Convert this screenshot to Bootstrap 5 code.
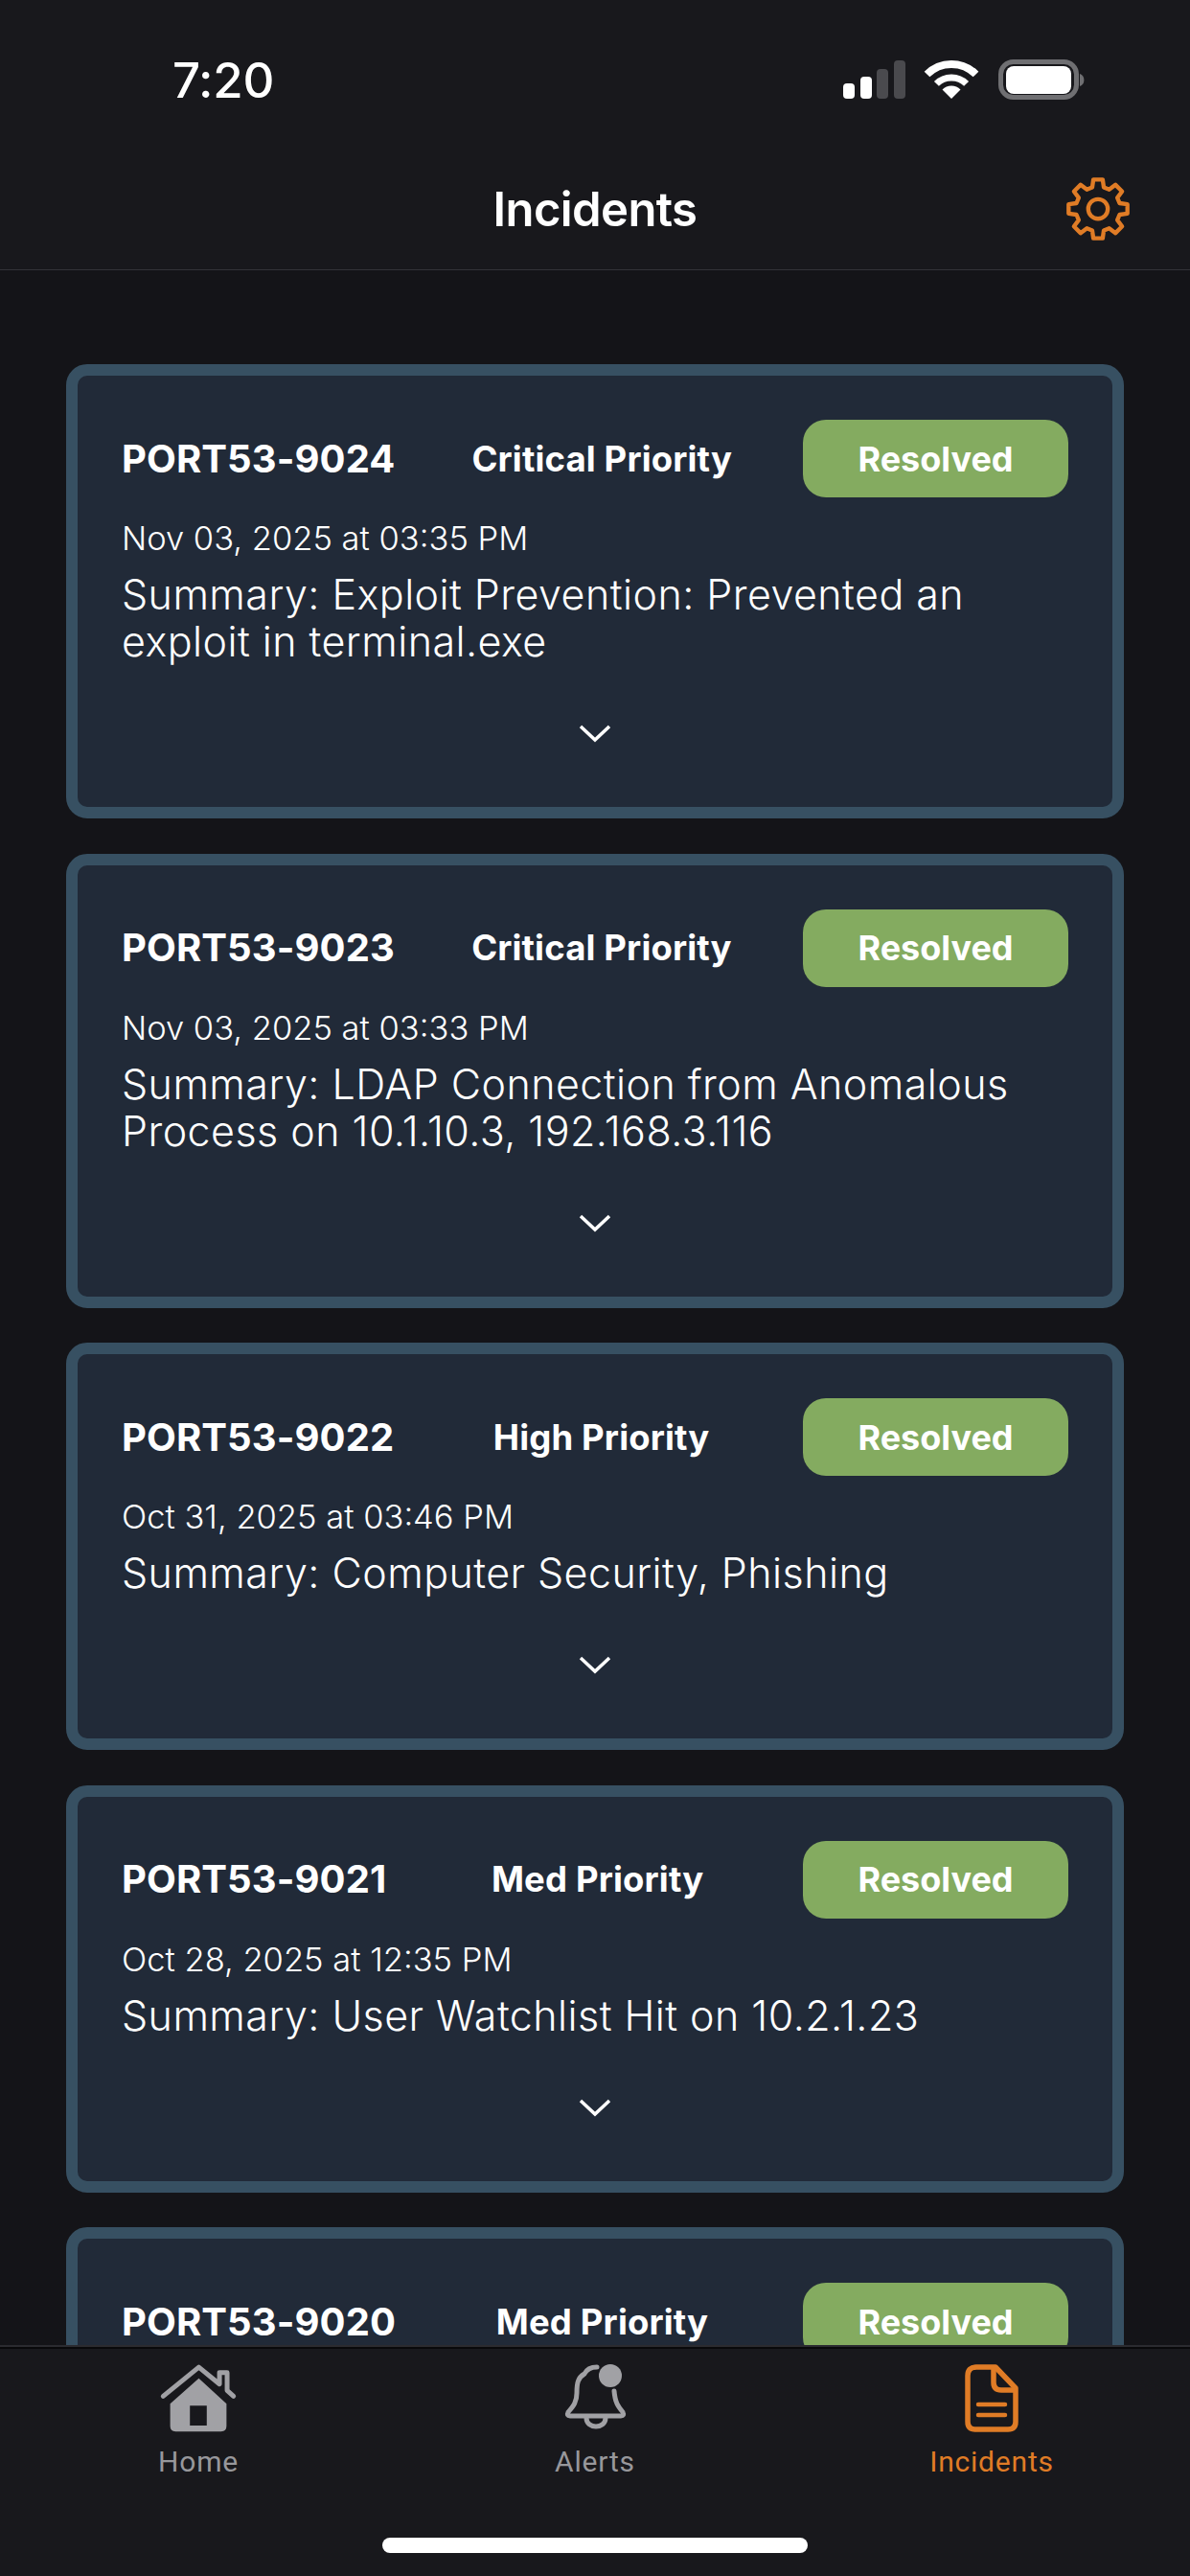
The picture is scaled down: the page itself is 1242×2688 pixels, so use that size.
<!DOCTYPE html>
<html lang="en">

<head>
  <meta charset="UTF-8">
  <meta name="viewport" content="width=device-width, initial-scale=1.0">
  <title>Incidents</title>
  <link rel="stylesheet" href="https://cdn.jsdelivr.net/npm/bootstrap@5.3.0/dist/css/bootstrap.min.css">
  <style>
    body { background: #141418; color: #fff; font-family: Inter, "Liberation Sans", sans-serif; }
    .status-area { height: 174px; padding: 61px 108px 0 180px; background: #18181c; }
    .status-time { font-size: 51px; line-height: 46px; font-weight: 500; letter-spacing: -.3px; }
    .top-bar { height: 108px; padding-bottom: 18px; background: #18181c; border-bottom: 1px solid #333338; }
    .top-title { font-size: 49px; line-height: 60px; font-weight: 600; letter-spacing: -.6px; }
    .gear-icon { right: 63px; top: 10px; }
    .incident-list { padding: 98px 69px 0; gap: 36.5px; }
    .incident-card { background: #212a38; border: 12px solid #375062; border-radius: 22px; color: #fff; }
    .incident-card .card-body { padding: 46px 46px 53px; }
    .incident-id { font-size: 40px; line-height: 48px; font-weight: 700; letter-spacing: .1px; }
    .incident-priority { font-size: 36.5px; line-height: 44px; font-weight: 700; letter-spacing: .15px; margin-left: 6px; }
    .incident-state { width: 277px; height: 81px; background: #84ab60; border-radius: 24px; font-size: 36px; line-height: 44px; font-weight: 700; }
    .incident-date { margin-top: 22px; font-size: 34.5px; line-height: 42px; font-weight: 300; }
    .incident-summary { margin-top: 13px; font-size: 43px; line-height: 49px; font-weight: 300; letter-spacing: .45px; }
    .expand-row { margin-top: 47px; height: 48px; }
    .tab-area { background: #18181c; border-top: 2px solid #09090b; box-shadow: 0 -2px 0 #2b2b30; padding-top: 14px; }
    .tab-icon { height: 75px; }
    .tab-label { margin-top: 11px; font-family: Roboto, sans-serif; font-size: 30px; line-height: 36px; letter-spacing: .8px; color: #97979b; }
    .tab-active .tab-label { color: #e07c26; }
    .home-bar { width: 444px; height: 16px; margin: 61px auto 24px; background: #fff; border-radius: 8px; }
  </style>
</head>

<body class="vh-100 d-flex flex-column overflow-hidden">
  <div class="status-area d-flex justify-content-between align-items-start flex-shrink-0">
    <div class="status-time">7:20</div>
    <svg width="254" height="44" viewBox="881 61 254 44">
      <rect x="881" y="87" width="12" height="16" rx="4" fill="#fff"/>
      <rect x="899" y="80" width="12" height="23" rx="4" fill="#fff"/>
      <rect x="916" y="72" width="12" height="31" rx="4" fill="#4a4a4e"/>
      <rect x="934" y="63" width="12" height="40" rx="4" fill="#4a4a4e"/>
      <path d="M968.5 77.5A36 36 0 0 1 1019.5 77.5" fill="none" stroke="#fff" stroke-width="8"/>
      <path d="M978.4 87.4A22 22 0 0 1 1009.6 87.4" fill="none" stroke="#fff" stroke-width="7"/>
      <path d="M994 103L984.5 93.5A13.4 13.4 0 0 1 1003.5 93.5Z" fill="#fff"/>
      <rect x="1045.5" y="64.5" width="79" height="37" rx="13" fill="none" stroke="#6f6f72" stroke-width="5"/>
      <rect x="1051" y="69" width="68" height="29" rx="8" fill="#fff"/>
      <path d="M1128 77A7 7 0 0 1 1128 90Z" fill="#6f6f72"/>
    </svg>
  </div>

  <div class="top-bar position-relative d-flex justify-content-center align-items-center flex-shrink-0">
    <div class="top-title">Incidents</div>
    <svg class="gear-icon position-absolute" width="66" height="68" viewBox="-34 -35 68 70">
      <path id="gearPath" fill="none" stroke="#e07c26" stroke-width="4.5" stroke-linejoin="round"/>
      <circle r="10.5" fill="none" stroke="#e07c26" stroke-width="4.5"/>
    </svg>
  </div>

  <main class="incident-list flex-grow-1 overflow-hidden d-flex flex-column">
    <div class="card incident-card flex-shrink-0">
      <div class="card-body">
        <div class="d-flex justify-content-between align-items-center">
          <div class="incident-id">PORT53-9024</div>
          <div class="incident-priority">Critical Priority</div>
          <div class="badge incident-state d-flex justify-content-center align-items-center">Resolved</div>
        </div>
        <div class="incident-date">Nov 03, 2025 at 03:35 PM</div>
        <div class="incident-summary">Summary: Exploit Prevention: Prevented an exploit in terminal.exe</div>
        <div class="expand-row d-flex justify-content-center align-items-center">
          <svg width="36" height="22" viewBox="0 0 36 22"><path d="M3 4L18 18L33 4" fill="none" stroke="#fff" stroke-width="3.5"/></svg>
        </div>
      </div>
    </div>

    <div class="card incident-card flex-shrink-0">
      <div class="card-body">
        <div class="d-flex justify-content-between align-items-center">
          <div class="incident-id">PORT53-9023</div>
          <div class="incident-priority">Critical Priority</div>
          <div class="badge incident-state d-flex justify-content-center align-items-center">Resolved</div>
        </div>
        <div class="incident-date">Nov 03, 2025 at 03:33 PM</div>
        <div class="incident-summary">Summary: LDAP Connection from Anomalous Process on 10.1.10.3, 192.168.3.116</div>
        <div class="expand-row d-flex justify-content-center align-items-center">
          <svg width="36" height="22" viewBox="0 0 36 22"><path d="M3 4L18 18L33 4" fill="none" stroke="#fff" stroke-width="3.5"/></svg>
        </div>
      </div>
    </div>

    <div class="card incident-card flex-shrink-0">
      <div class="card-body">
        <div class="d-flex justify-content-between align-items-center">
          <div class="incident-id">PORT53-9022</div>
          <div class="incident-priority">High Priority</div>
          <div class="badge incident-state d-flex justify-content-center align-items-center">Resolved</div>
        </div>
        <div class="incident-date">Oct 31, 2025 at 03:46 PM</div>
        <div class="incident-summary">Summary: Computer Security, Phishing</div>
        <div class="expand-row d-flex justify-content-center align-items-center">
          <svg width="36" height="22" viewBox="0 0 36 22"><path d="M3 4L18 18L33 4" fill="none" stroke="#fff" stroke-width="3.5"/></svg>
        </div>
      </div>
    </div>

    <div class="card incident-card flex-shrink-0">
      <div class="card-body">
        <div class="d-flex justify-content-between align-items-center">
          <div class="incident-id">PORT53-9021</div>
          <div class="incident-priority">Med Priority</div>
          <div class="badge incident-state d-flex justify-content-center align-items-center">Resolved</div>
        </div>
        <div class="incident-date">Oct 28, 2025 at 12:35 PM</div>
        <div class="incident-summary">Summary: User Watchlist Hit on 10.2.1.23</div>
        <div class="expand-row d-flex justify-content-center align-items-center">
          <svg width="36" height="22" viewBox="0 0 36 22"><path d="M3 4L18 18L33 4" fill="none" stroke="#fff" stroke-width="3.5"/></svg>
        </div>
      </div>
    </div>

    <div class="card incident-card flex-shrink-0">
      <div class="card-body">
        <div class="d-flex justify-content-between align-items-center">
          <div class="incident-id">PORT53-9020</div>
          <div class="incident-priority">Med Priority</div>
          <div class="badge incident-state d-flex justify-content-center align-items-center">Resolved</div>
        </div>
      </div>
    </div>
  </main>

  <nav class="tab-area flex-shrink-0 position-relative">
    <div class="row g-0 text-center">
      <div class="col-4">
        <div class="tab-icon d-flex justify-content-center align-items-center">
          <svg width="83" height="75" viewBox="100 105 250 225">
            <path d="M135 235L225 155L312 235V305Q312 322 295 322H152Q135 322 135 305Z M197 241V303H250V241Z" fill="#a1a1a5" fill-rule="evenodd"/>
            <path d="M113 211L225 120L290 173V137H314V193L334 211" fill="none" stroke="#a1a1a5" stroke-width="15" stroke-linecap="round" stroke-linejoin="round"/>
          </svg>
        </div>
        <div class="tab-label">Home</div>
      </div>
      <div class="col-4">
        <div class="tab-icon d-flex justify-content-center align-items-center">
          <svg width="67" height="71" viewBox="-2 0 67 71">
            <path d="M33 3C26 3 22 6 20 10C13 14 12 20 12 30C12 40 8 44 3 50Q1 54 5 54H58Q62 54 60 50C55 44 52 40 51 28" fill="none" stroke="#a1a1a5" stroke-width="5" stroke-linecap="round"/>
            <path d="M22 56C22 68 42 68 42 56" fill="none" stroke="#a1a1a5" stroke-width="5"/>
            <circle cx="47" cy="12" r="12" fill="#a1a1a5"/>
          </svg>
        </div>
        <div class="tab-label">Alerts</div>
      </div>
      <div class="col-4 tab-active">
        <div class="tab-icon d-flex justify-content-center align-items-center">
          <svg width="56" height="71" viewBox="0 0 56 71">
            <path d="M12 3H32L53 25V60Q53 68 45 68H11Q3 68 3 60V12Q3 3 12 3Z" fill="none" stroke="#e07c26" stroke-width="5.5" stroke-linejoin="round"/>
            <path d="M30 3V19Q30 27 38 27H53" fill="none" stroke="#e07c26" stroke-width="5.5"/>
            <path d="M14 42H42M14 53H42" fill="none" stroke="#e07c26" stroke-width="4.5" stroke-linecap="round"/>
          </svg>
        </div>
        <div class="tab-label">Incidents</div>
      </div>
    </div>
    <div class="home-bar"></div>
  </nav>

  <script src="https://cdn.jsdelivr.net/npm/bootstrap@5.3.0/dist/js/bootstrap.bundle.min.js"></script>
  <script>
    // 8 tooth gear outline
    const pts = [];
    for (let k = 0; k < 8; k++) {
      const a = k * 45;
      [[-15, 24], [-9, 32], [9, 32], [15, 24]].forEach(([d, r]) => {
        const t = (a + d - 90) * Math.PI / 180;
        pts.push((r * Math.cos(t)).toFixed(2) + ' ' + (r * Math.sin(t)).toFixed(2));
      });
    }
    document.getElementById('gearPath').setAttribute('d', 'M' + pts.join('L') + 'Z');
  </script>
</body>

</html>
